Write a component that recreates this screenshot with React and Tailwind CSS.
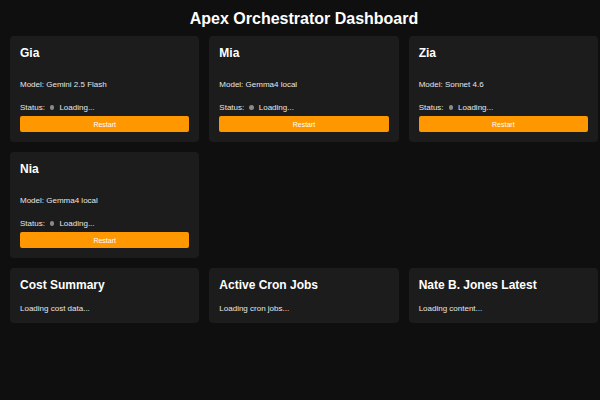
import React from "react";

const agents = [
  { name: "Gia", model: "Gemini 2.5 Flash" },
  { name: "Mia", model: "Gemma4 local" },
  { name: "Zia", model: "Sonnet 4.6" },
  { name: "Nia", model: "Gemma4 local" },
];

const panels = [
  { title: "Cost Summary", text: "Loading cost data..." },
  { title: "Active Cron Jobs", text: "Loading cron jobs..." },
  { title: "Nate B. Jones Latest", text: "Loading content..." },
];

const AgentCard = ({ name, model }) => (
  <div className="bg-[#1c1c1c] rounded-[4px] p-[10px] flex flex-col">
    <h2 className="text-[12px] leading-[14px] font-bold text-white">{name}</h2>
    <p className="mt-[20px] text-[8px] leading-[9px] text-[#e6e6e6]">Model: {model}</p>
    <p className="mt-[14px] text-[8px] leading-[9px] text-[#e6e6e6] flex items-center">
      <span>Status:</span>
      <span className="inline-block w-[4.5px] h-[4.5px] rounded-full bg-[#8a8a8a] mx-[5px]"></span>
      <span>Loading...</span>
    </p>
    <button className="mt-[4px] h-[16px] w-full bg-[#ff9800] rounded-[2px] text-white text-[7px] leading-none">
      Restart
    </button>
  </div>
);

const Panel = ({ title, text }) => (
  <div className="bg-[#1c1c1c] rounded-[4px] p-[10px]">
    <h2 className="text-[12px] leading-[14px] font-bold text-white">{title}</h2>
    <p className="mt-[12px] text-[8px] leading-[9px] text-[#e6e6e6]">{text}</p>
  </div>
);

export default function App() {
  return (
    <div
      className="min-h-[400px] bg-[#0f0f0f] pt-[10px] pl-[10px] pr-[2px]"
      style={{ fontFamily: '"Liberation Sans", Arial, sans-serif' }}
    >
      <h1 className="text-center text-[16px] leading-[18px] font-bold text-white mb-[8px]">
        Apex Orchestrator Dashboard
      </h1>

      {/* Agents */}
      <div className="grid grid-cols-3 gap-[10px]">
        {agents.map((a) => (
          <AgentCard key={a.name} {...a} />
        ))}
      </div>

      {/* Info panels */}
      <div className="grid grid-cols-3 gap-[10px] mt-[10px]">
        {panels.map((p) => (
          <Panel key={p.title} {...p} />
        ))}
      </div>
    </div>
  );
}
